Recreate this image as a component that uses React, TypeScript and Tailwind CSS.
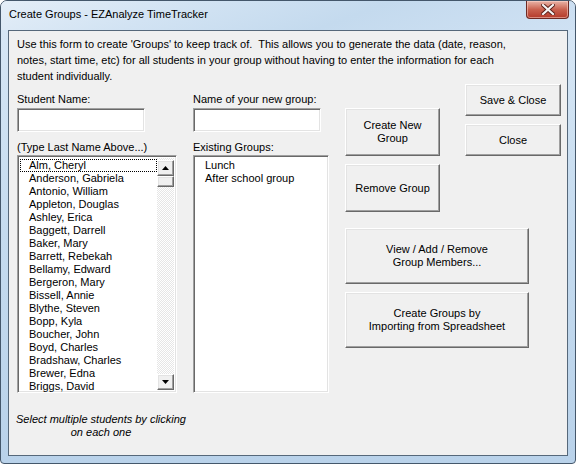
const students = [
  "Alm, Cheryl",
  "Anderson, Gabriela",
  "Antonio, William",
  "Appleton, Douglas",
  "Ashley, Erica",
  "Baggett, Darrell",
  "Baker, Mary",
  "Barrett, Rebekah",
  "Bellamy, Edward",
  "Bergeron, Mary",
  "Bissell, Annie",
  "Blythe, Steven",
  "Bopp, Kyla",
  "Boucher, John",
  "Boyd, Charles",
  "Bradshaw, Charles",
  "Brewer, Edna",
  "Briggs, David",
];

const groups = ["Lunch", "After school group"];

const raised =
  "border border-t-white border-l-white border-r-[#696969] border-b-[#696969] shadow-[inset_-1px_-1px_0_#a0a0a0,inset_1px_1px_0_#e3e3e3] bg-[#f0f0f0]";
const sunken =
  "border border-t-[#a0a0a0] border-l-[#a0a0a0] border-r-white border-b-white shadow-[inset_1px_1px_0_#696969,inset_-1px_-1px_0_#e3e3e3] bg-white";

function Button({ className, children }: { className: string; children: React.ReactNode }) {
  return (
    <button className={`${raised} ${className} flex items-center justify-center text-center text-[11px] leading-[13px] text-black`}>
      <span>{children}</span>
    </button>
  );
}

function Arrow({ up }: { up?: boolean }) {
  return (
    <svg width="7" height="4" viewBox="0 0 7 4">
      <path d={up ? "M0 4 L3.5 0 L7 4 Z" : "M0 0 L7 0 L3.5 4 Z"} fill="#000" />
    </svg>
  );
}

export default function App() {
  return (
    <div className="w-[576px] h-[464px] bg-white font-['Liberation_Sans',Arial,sans-serif]">
      <div className="w-full h-full flex flex-col rounded-t-[7px] rounded-b-[4px] border border-[#44576b] bg-gradient-to-b from-[#d9e8f6] via-[#c5dbef] to-[#b9d2ea] overflow-hidden">
        {/* title bar */}
        <div className="h-[29px] flex items-start justify-between bg-[linear-gradient(160deg,#e4eef8_0%,#d2e3f3_30%,#c4daee_60%,#cfe1f3_100%)]">
          <span className="ml-[8px] mt-[6px] text-[11px] leading-[14px] text-black">
            Create Groups - EZAnalyze TimeTracker
          </span>
          <div className="mr-[6px] w-[43px] h-[18px] rounded-b-[4px] border border-t-0 border-[#6e2a24] bg-gradient-to-b from-[#e8b4a8] via-[#c9614f] to-[#b4392a] shadow-[inset_0_0_0_1px_rgba(255,220,210,0.5)] flex items-center justify-center">
            <svg width="14" height="11" viewBox="0 0 14 11">
              <path d="M2 1 L12 10 M12 1 L2 10" stroke="#5b1f18" strokeWidth="4" strokeLinecap="square" />
              <path d="M2 1 L12 10 M12 1 L2 10" stroke="#f4f4f4" strokeWidth="2.2" strokeLinecap="square" />
            </svg>
          </div>
        </div>

        {/* client area */}
        <div className="flex-1 px-[7px] pb-[7px]">
          <div className="h-full border border-[#56687a] bg-[#f0f0f0] pl-[8px] pt-[5px] text-[11px] text-black">
            <p className="leading-[16px]">
              Use this form to create 'Groups' to keep track of.&nbsp; This allows you to generate the data (date, reason,
              <br />
              notes, start time, etc) for all students in your group without having to enter the information for each
              <br />
              student individually.
            </p>

            <div className="flex items-start">
              {/* students column */}
              <div className="w-[160px] flex flex-col">
                <div className="mt-[7px] leading-[16px]">Student Name:</div>
                <div className={`${sunken} mt-[1px] w-[128px] h-[24px]`} />
                <div className="mt-[7px] leading-[16px]">(Type Last Name Above...)</div>
                <div className={`${sunken} h-[238px] flex p-[2px]`}>
                  <div className="flex-1 pt-[1px]">
                    {students.map((s, i) => (
                      <div
                        key={s}
                        className={`h-[13px] leading-[13px] pl-[9px] ${i === 0 ? "outline outline-1 outline-dotted outline-black -outline-offset-1" : ""}`}
                      >
                        {s}
                      </div>
                    ))}
                  </div>
                  <div className="w-[17px] flex flex-col bg-[repeating-conic-gradient(#ffffff_0_25%,#e6e6e6_0_50%)] bg-[length:2px_2px]">
                    <div className={`${raised} h-[16px] mt-[2px] flex items-center justify-center`}>
                      <Arrow up />
                    </div>
                    <div className={`${raised} h-[11px]`} />
                    <div className="flex-1" />
                    <div className={`${raised} h-[16px] flex items-center justify-center`}>
                      <Arrow />
                    </div>
                  </div>
                </div>
                <div className="mt-[20px] w-[168px] flex flex-col items-center italic leading-[13px] whitespace-nowrap">
                  <span>Select multiple students by clicking</span>
                  <span>on each one</span>
                </div>
              </div>

              {/* groups column */}
              <div className="ml-[16px] w-[136px] flex flex-col">
                <div className="mt-[7px] leading-[16px]">Name of your new group:</div>
                <div className={`${sunken} mt-[1px] w-[128px] h-[24px]`} />
                <div className="mt-[7px] leading-[16px]">Existing Groups:</div>
                <div className={`${sunken} h-[238px] p-[2px] pt-[3px]`}>
                  {groups.map((g) => (
                    <div key={g} className="h-[13px] leading-[13px] pl-[9px]">
                      {g}
                    </div>
                  ))}
                </div>
              </div>

              {/* buttons column */}
              <div className="ml-[16px] flex flex-col">
                <div className="flex items-start">
                  <div className="mt-[24px] flex flex-col gap-[8px]">
                    <Button className="w-[95px] h-[48px]">
                      Create New
                      <br />
                      Group
                    </Button>
                    <Button className="w-[95px] h-[48px]">Remove Group</Button>
                  </div>
                  <div className="ml-[25px] flex flex-col gap-[8px]">
                    <Button className="w-[96px] h-[32px]">Save &amp; Close</Button>
                    <Button className="w-[96px] h-[32px]">Close</Button>
                  </div>
                </div>
                <Button className="mt-[16px] w-[184px] h-[56px]">
                  View / Add / Remove
                  <br />
                  Group Members...
                </Button>
                <Button className="mt-[8px] w-[184px] h-[56px]">
                  Create Groups by
                  <br />
                  Importing from Spreadsheet
                </Button>
              </div>
            </div>
          </div>
        </div>
      </div>
    </div>
  );
}
